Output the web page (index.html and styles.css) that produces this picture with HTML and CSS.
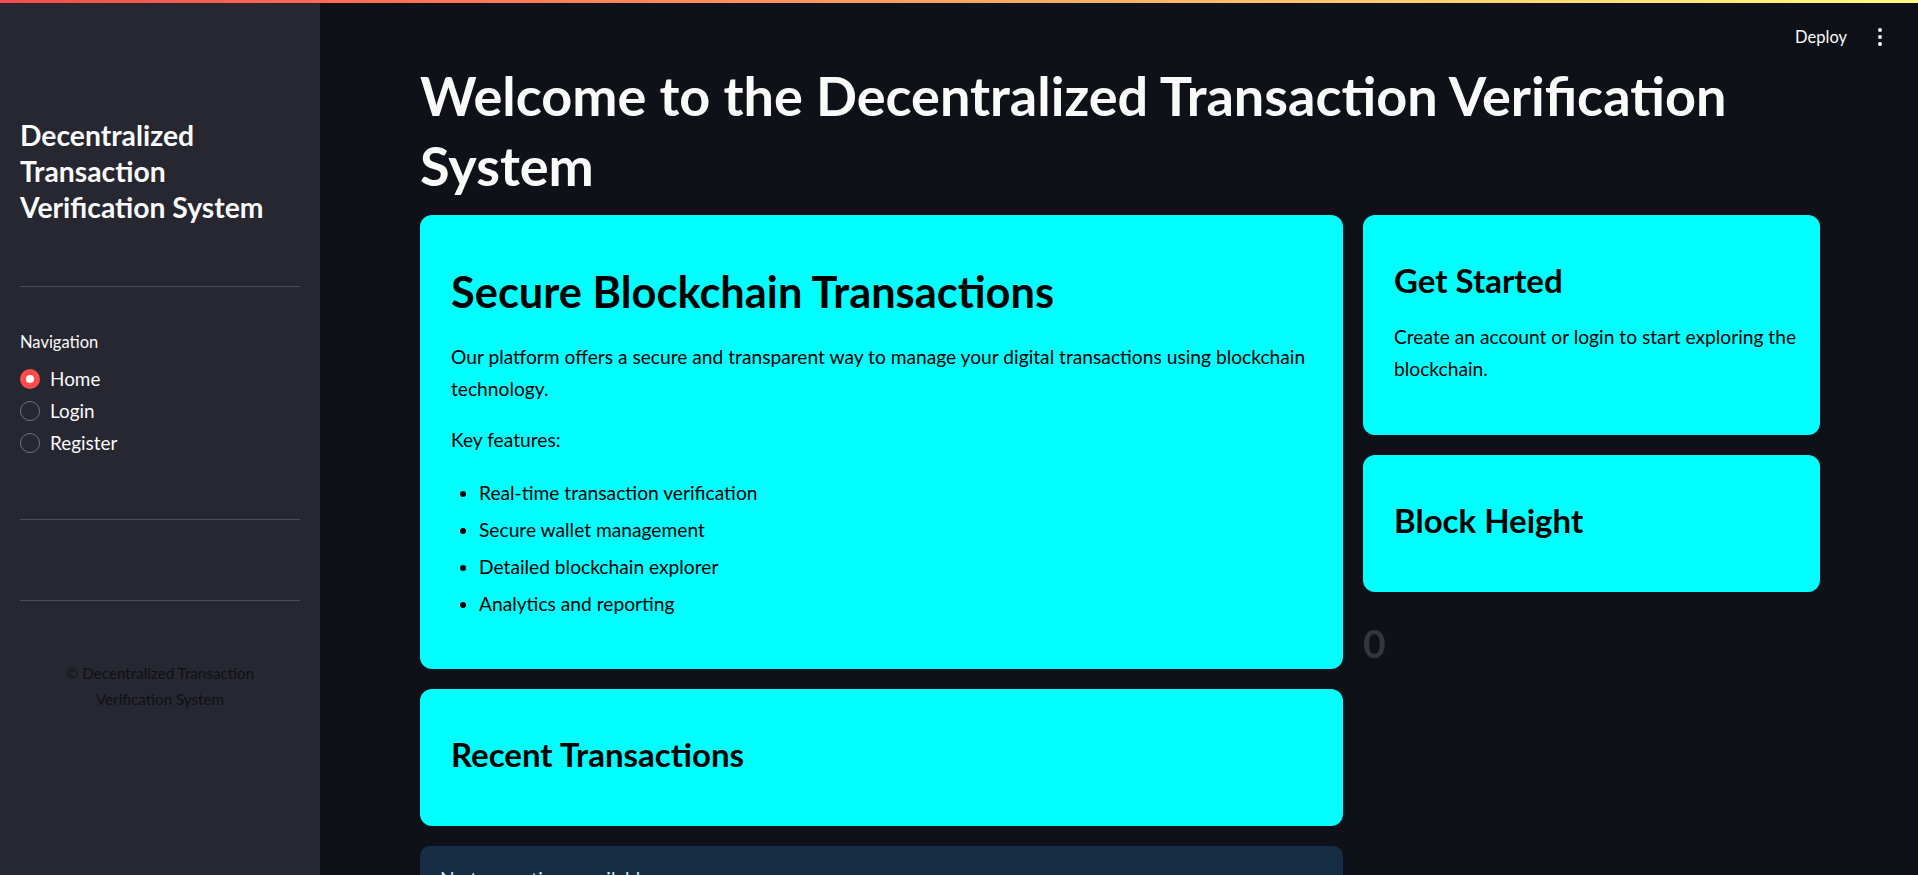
FILE: index.html
```html
<!DOCTYPE html>
<html lang="en">
<head>
<meta charset="utf-8">
<title>Decentralized Transaction Verification System</title>
<link rel="stylesheet" href="styles.css">
</head>
<body>
<div class="decoration"></div>
<div class="app">
  <aside class="sidebar">
    <h1 class="side-title">Decentralized Transaction Verification System</h1>
    <hr class="side-rule rule-first">
    <div class="nav-label">Navigation</div>
    <div class="radio-group">
      <label class="radio-row"><span class="radio radio-on"></span><span class="radio-text">Home</span></label>
      <label class="radio-row"><span class="radio"></span><span class="radio-text">Login</span></label>
      <label class="radio-row"><span class="radio"></span><span class="radio-text">Register</span></label>
    </div>
    <hr class="side-rule rule-second">
    <hr class="side-rule rule-third">
    <p class="copyright">© Decentralized Transaction Verification System</p>
  </aside>

  <main class="main">
    <header class="topbar">
      <span class="deploy">Deploy</span>
      <span class="kebab"><i></i><i></i><i></i></span>
    </header>

    <h1 class="page-title">Welcome to the Decentralized Transaction Verification System</h1>

    <div class="columns">
      <div class="col">
        <section class="card card-main">
          <h2 class="card-h2">Secure Blockchain Transactions</h2>
          <p class="card-p">Our platform offers a secure and transparent way to manage your digital transactions using blockchain technology.</p>
          <p class="card-p">Key features:</p>
          <ul class="card-list">
            <li>Real-time transaction verification</li>
            <li>Secure wallet management</li>
            <li>Detailed blockchain explorer</li>
            <li>Analytics and reporting</li>
          </ul>
        </section>
        <section class="card">
          <h3 class="card-h3">Recent Transactions</h3>
        </section>
        <div class="info-box">No transactions available.</div>
      </div>
      <div class="col">
        <section class="card card-start">
          <h3 class="card-h3">Get Started</h3>
          <p class="card-p">Create an account or login to start exploring the blockchain.</p>
        </section>
        <section class="card">
          <h3 class="card-h3">Block Height</h3>
        </section>
        <div class="metric">0</div>
      </div>
    </div>
  </main>
</div>
</body>
</html>
```

FILE: styles.css
```css
* {
  box-sizing: border-box;
}

html, body {
  margin: 0;
  padding: 0;
}

body {
  background: #0e1117;
  color: #fafafa;
  font-family: Lato, "Noto Sans", "Liberation Sans", sans-serif;
}

.decoration {
  position: absolute;
  top: 0;
  left: 0;
  right: 0;
  height: 3px;
  background: linear-gradient(90deg, #ff4b4b, #fffd80);
  z-index: 5;
}

.app {
  display: flex;
  min-height: 100vh;
}

/* ---------- sidebar ---------- */
.sidebar {
  width: 320px;
  flex: 0 0 320px;
  background: #262730;
  padding: 117px 20px 0 20px;
}

.side-title {
  margin: 0;
  font-size: 28.3px;
  line-height: 36px;
  font-weight: 700;
  color: #fafafa;
}

.side-rule {
  border: 0;
  height: 1px;
  background: #4d4e57;
  margin: 0;
}

.rule-first {
  margin-top: 61px;
}

.nav-label {
  margin-top: 44px;
  font-size: 16.5px;
  line-height: 22px;
  color: #fafafa;
}

.radio-group {
  margin-top: 10px;
  display: flex;
  flex-direction: column;
}

.radio-row {
  display: flex;
  align-items: center;
  gap: 10px;
  height: 32px;
}

.radio {
  width: 20px;
  height: 20px;
  border-radius: 50%;
  border: 1px solid #72737c;
  display: flex;
  align-items: center;
  justify-content: center;
}

.radio-on {
  border: 0;
  background: #ff4b4b;
}

.radio-on::after {
  content: "";
  width: 8px;
  height: 8px;
  border-radius: 50%;
  background: #ffffff;
}

.radio-text {
  font-size: 18.9px;
  line-height: 24px;
  color: #fafafa;
}

.rule-second {
  margin-top: 60px;
}

.rule-third {
  margin-top: 80px;
}

.copyright {
  margin: 59px 0 0;
  padding: 0 40px;
  text-align: center;
  font-size: 15.2px;
  line-height: 26px;
  color: #0f1014;
}

/* ---------- main ---------- */
.main {
  flex: 1;
  position: relative;
  padding: 61px 98px 40px 100px;
}

.topbar {
  position: absolute;
  top: 0;
  right: 0;
  height: 74px;
  display: flex;
  align-items: center;
  gap: 31px;
  padding-right: 36px;
}

.deploy {
  font-size: 16.5px;
  color: #fafafa;
}

.kebab {
  display: flex;
  flex-direction: column;
  gap: 3px;
}

.kebab i {
  display: block;
  width: 4px;
  height: 4px;
  border-radius: 50%;
  background: #fafafa;
}

.page-title {
  margin: 0 0 14px;
  font-size: 54px;
  line-height: 70px;
  font-weight: 700;
  color: #fafafa;
}

.columns {
  display: grid;
  grid-template-columns: 923fr 457fr;
  gap: 20px;
  align-items: start;
}

.col {
  display: flex;
  flex-direction: column;
  gap: 20px;
}

.card {
  background: #00ffff;
  color: #000000;
  border-radius: 12px;
  padding: 31px 31px;
}

.card-start {
  padding-right: 12px;
}

.card-h2 {
  margin: 20px 0 25px;
  font-size: 43.4px;
  line-height: 50px;
  font-weight: 700;
}

.card-h3 {
  margin: 14px 0 21px;
  font-size: 33px;
  line-height: 40px;
  font-weight: 700;
}

.card-p {
  margin: 0 0 19px;
  font-size: 19.2px;
  line-height: 32px;
}

.card-list {
  margin: 21px 0 18px;
  padding-left: 28px;
  font-size: 19.2px;
  line-height: 32px;
}

.card-list li {
  margin-bottom: 5px;
}

.card-list li:last-child {
  margin-bottom: 0;
}

.info-box {
  background: #172d43;
  color: #c7ebff;
  border-radius: 10px;
  padding: 17px 20px 20px;
  font-size: 19.2px;
  line-height: 32px;
  min-height: 120px;
}

.metric {
  margin-top: 8px;
  font-size: 39px;
  line-height: 47px;
  font-weight: 700;
  color: #35363c;
}
```
